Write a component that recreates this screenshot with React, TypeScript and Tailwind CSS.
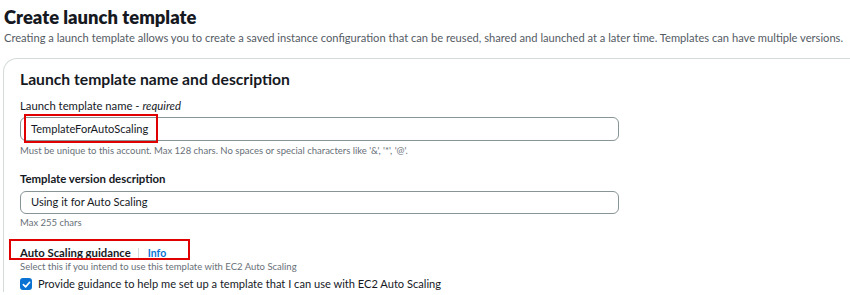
export default function App() {
  return (
    <div className="w-[850px] h-[295px] overflow-hidden bg-white font-['Lato',sans-serif] text-[#16191f]">
      <div className="pl-[4px] pt-[5px]">
        <h1 className="text-[18.4px] leading-[24px] font-extrabold">Create launch template</h1>
        <p className="mt-[1px] text-[11.15px] leading-[16px] text-[#545b64] whitespace-nowrap">
          Creating a launch template allows you to create a saved instance configuration that can be reused, shared and launched at a later time. Templates can have multiple versions.
        </p>
      </div>
      <div className="mt-[12px] ml-[3px] border-t border-l border-[#d5dbdb] rounded-tl-[14px] pl-[16px] pt-[10px]">
        <h2 className="text-[15.7px] leading-[20px] font-bold">Launch template name and description</h2>
        <div className="mt-[9px]">
          <label className="block text-[11.3px] leading-[16px]">
            Launch template name - <i>required</i>
          </label>
          <div className="relative mt-[3px] w-[599px] h-[24px] border border-[#879596] rounded-[6px] flex items-center pl-[10px] text-[11.1px]">
            TemplateForAutoScaling
            <div className="absolute left-[3px] top-[-4px] w-[134px] h-[29px] border-2 border-[#e00000]" />
          </div>
          <p className="mt-[3px] text-[9.5px] leading-[14px] text-[#687078]">
            Must be unique to this account. Max 128 chars. No spaces or special characters like '&amp;', '*', '@'.
          </p>
        </div>
        <div className="mt-[13px]">
          <label className="block text-[11.4px] leading-[16px] font-bold">Template version description</label>
          <div className="mt-[4px] w-[599px] h-[23px] border border-[#879596] rounded-[6px] flex items-center pl-[10px] text-[11.1px]">
            Using it for Auto Scaling
          </div>
          <p className="mt-[2px] text-[9.5px] leading-[14px] text-[#687078]">Max 255 chars</p>
        </div>
        <div className="mt-[15px]">
          <div className="relative flex items-center text-[11.3px] leading-[16px]">
            <span className="font-bold">Auto Scaling guidance</span>
            <span className="ml-[7px] mr-[9px] h-[11px] border-l border-[#d5dbdb]" />
            <span className="text-[#0972d3] font-bold text-[10.5px]">Info</span>
            <div className="absolute left-[-11px] top-[-6px] w-[181px] h-[21px] border-2 border-[#e00000]" />
          </div>
          <p className="text-[9.5px] leading-[12px] text-[#687078]">
            Select this if you intend to use this template with EC2 Auto Scaling
          </p>
          <label className="mt-[3px] flex items-center gap-[6px] text-[11.1px] leading-[16px]">
            <span className="w-[12px] h-[12px] rounded-[3px] bg-[#0972d3] flex items-center justify-center">
              <svg width="9" height="9" viewBox="0 0 10 10" fill="none">
                <path d="M1.5 5.2 L4 7.6 L8.5 2.5" stroke="white" strokeWidth="1.8" strokeLinecap="round" strokeLinejoin="round" />
              </svg>
            </span>
            Provide guidance to help me set up a template that I can use with EC2 Auto Scaling
          </label>
        </div>
      </div>
    </div>
  );
}
